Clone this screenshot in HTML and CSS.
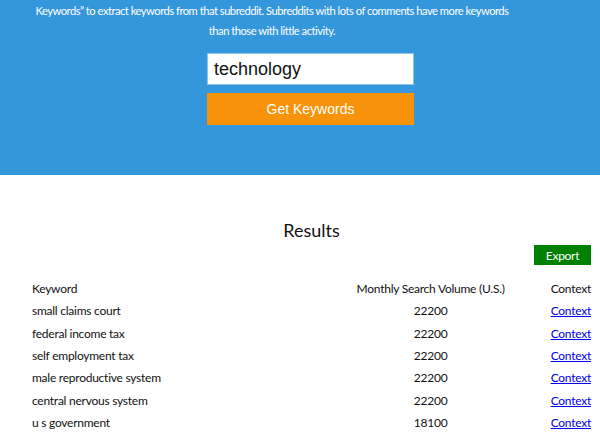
FILE: index.html
```html
<!DOCTYPE html>
<html>
<head>
<meta charset="utf-8">
<link rel="stylesheet" href="styles.css">
</head>
<body>
<section class="hero">
  <p class="intro">Keywords” to extract keywords from that subreddit. Subreddits with lots of comments have more keywords than those with little activity.</p>
  <form class="search">
    <input class="search-input" type="text" value="technology">
    <button class="search-btn" type="button">Get Keywords</button>
  </form>
</section>
<section class="results">
  <h2 class="results-title">Results</h2>
  <div class="export-row"><button class="export-btn" type="button">Export</button></div>
  <table class="kw-table">
    <thead>
      <tr><th class="c-kw">Keyword</th><th class="c-vol">Monthly Search Volume (U.S.)</th><th class="c-ctx">Context</th></tr>
    </thead>
    <tbody>
      <tr><td class="c-kw">small claims court</td><td class="c-vol">22200</td><td class="c-ctx"><a href="#">Context</a></td></tr>
      <tr><td class="c-kw">federal income tax</td><td class="c-vol">22200</td><td class="c-ctx"><a href="#">Context</a></td></tr>
      <tr><td class="c-kw">self employment tax</td><td class="c-vol">22200</td><td class="c-ctx"><a href="#">Context</a></td></tr>
      <tr><td class="c-kw">male reproductive system</td><td class="c-vol">22200</td><td class="c-ctx"><a href="#">Context</a></td></tr>
      <tr><td class="c-kw">central nervous system</td><td class="c-vol">22200</td><td class="c-ctx"><a href="#">Context</a></td></tr>
      <tr><td class="c-kw">u s government</td><td class="c-vol">18100</td><td class="c-ctx"><a href="#">Context</a></td></tr>
    </tbody>
  </table>
</section>
</body>
</html>
```
FILE: styles.css
```css
html, body {
  margin: 0;
  padding: 0;
  background: #fff;
}
body {
  font-family: Lato, "Noto Sans", sans-serif;
  color: #111;
  overflow: hidden;
}
.hero {
  background: #3597db;
  height: 175px;
  box-sizing: border-box;
  padding-top: 1px;
  color: #fff;
}
.intro {
  margin: 0 0 0 31px;
  width: 482px;
  font-size: 11.2px;
  letter-spacing: -0.5px;
  line-height: 20px;
  text-align: center;
}
.search {
  display: flex;
  flex-direction: column;
  gap: 8px;
  width: 207px;
  margin: 12px 0 0 207px;
}
.search-input {
  box-sizing: border-box;
  height: 32px;
  width: 100%;
  margin: 0;
  border: 1px solid #8cc4ee;
  padding: 0 6px;
  font-family: "Liberation Sans", Arial, sans-serif;
  font-size: 18px;
  color: #111;
  background: #fff;
  outline: none;
}
.search-btn {
  height: 32px;
  width: 100%;
  border: 0;
  margin: 0;
  background: #f7930a;
  color: #fff;
  font-family: "Liberation Sans", Arial, sans-serif;
  font-size: 14px;
}
.results {
  padding: 0 9px 0 32px;
}
.results-title {
  margin: 43px 0 0 0;
  height: 24px;
  font-size: 18px;
  line-height: 24px;
  font-weight: 400;
  text-align: center;
}
.export-row {
  display: flex;
  justify-content: flex-end;
  margin-top: 3px;
}
.export-btn {
  width: 57px;
  height: 20px;
  border: 0;
  padding: 0;
  background: #008000;
  color: #fff;
  font-family: Lato, "Noto Sans", sans-serif;
  font-size: 12px;
  letter-spacing: -0.3px;
}
.kw-table {
  margin-top: 13px;
  width: 559px;
  border-collapse: collapse;
  font-size: 12px;
  letter-spacing: -0.25px;
  line-height: 22.33px;
}
.kw-table th,
.kw-table td {
  padding: 0;
  font-weight: 400;
}
.c-kw { text-align: left; }
.c-vol { width: 166px; text-align: center; }
.c-ctx { width: 39px; padding-left: 37px !important; text-align: right; }
.c-ctx a { color: #0000ee; text-decoration: underline; }
```
